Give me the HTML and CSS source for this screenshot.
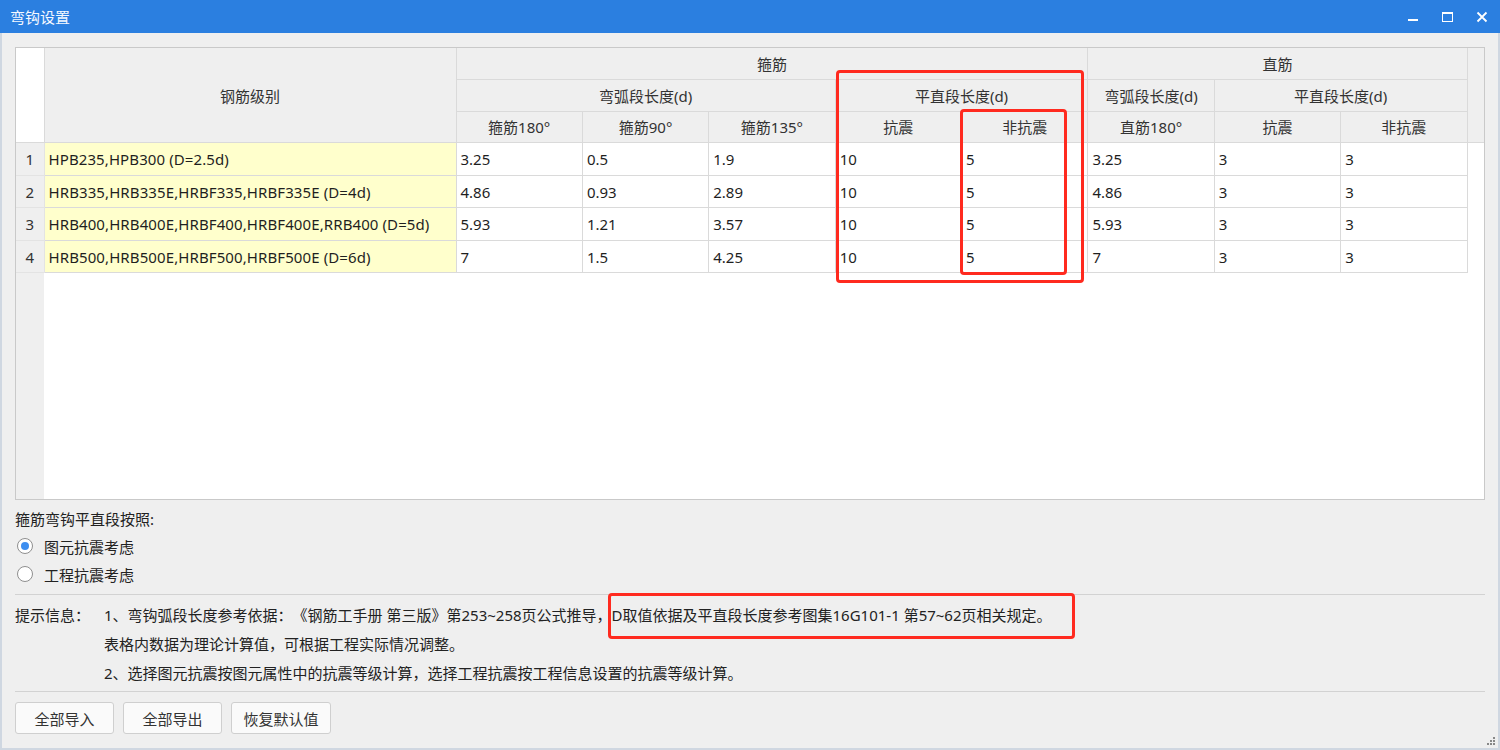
FILE: index.html
```html
<!DOCTYPE html>
<html lang="zh">
<head>
<meta charset="utf-8">
<title>弯钩设置</title>
<link rel="stylesheet" href="styles.css">
</head>
<body>
<div class="window">
  <div class="titlebar">
    <span class="title">弯钩设置</span>
    <div class="controls">
      <span class="ctl ctl-min"></span>
      <span class="ctl ctl-max"></span>
      <svg class="ctl-close" width="12" height="12" viewBox="0 0 12 12"><path d="M1.5 1.5 L10.5 10.5 M10.5 1.5 L1.5 10.5" stroke="#fff" stroke-width="1.8"/></svg>
    </div>
  </div>
  <div class="content">
    <div class="grid">
      <table class="tbl">
        <colgroup>
          <col class="c-num"><col class="c-grade">
          <col class="c-v"><col class="c-v"><col class="c-v"><col class="c-v"><col class="c-v"><col class="c-v"><col class="c-v"><col class="c-v">
          <col class="c-fill">
        </colgroup>
        <thead>
          <tr>
            <th class="corner" rowspan="3"></th>
            <th rowspan="3">钢筋级别</th>
            <th colspan="5">箍筋</th>
            <th colspan="3">直筋</th>
            <th class="fill" rowspan="3"></th>
          </tr>
          <tr>
            <th colspan="3">弯弧段长度(d)</th>
            <th colspan="2">平直段长度(d)</th>
            <th>弯弧段长度(d)</th>
            <th colspan="2">平直段长度(d)</th>
          </tr>
          <tr>
            <th>箍筋180°</th>
            <th>箍筋90°</th>
            <th>箍筋135°</th>
            <th>抗震</th>
            <th>非抗震</th>
            <th>直筋180°</th>
            <th>抗震</th>
            <th>非抗震</th>
          </tr>
        </thead>
        <tbody>
          <tr>
            <td class="num">1</td><td class="grade">HPB235,HPB300 (D=2.5d)</td>
            <td>3.25</td><td>0.5</td><td>1.9</td><td>10</td><td>5</td><td>3.25</td><td>3</td><td>3</td><td class="fill"></td>
          </tr>
          <tr>
            <td class="num">2</td><td class="grade">HRB335,HRB335E,HRBF335,HRBF335E (D=4d)</td>
            <td>4.86</td><td>0.93</td><td>2.89</td><td>10</td><td>5</td><td>4.86</td><td>3</td><td>3</td><td class="fill"></td>
          </tr>
          <tr>
            <td class="num">3</td><td class="grade">HRB400,HRB400E,HRBF400,HRBF400E,RRB400 (D=5d)</td>
            <td>5.93</td><td>1.21</td><td>3.57</td><td>10</td><td>5</td><td>5.93</td><td>3</td><td>3</td><td class="fill"></td>
          </tr>
          <tr>
            <td class="num">4</td><td class="grade">HRB500,HRB500E,HRBF500,HRBF500E (D=6d)</td>
            <td>7</td><td>1.5</td><td>4.25</td><td>10</td><td>5</td><td>7</td><td>3</td><td>3</td><td class="fill"></td>
          </tr>
        </tbody>
      </table>
      <div class="grid-empty"></div>
    </div>

    <div class="opt-title">箍筋弯钩平直段按照:</div>
    <div class="opt"><span class="radio checked"></span><span>图元抗震考虑</span></div>
    <div class="opt"><span class="radio"></span><span>工程抗震考虑</span></div>

    <div class="sep"></div>

    <div class="tips">
      <div class="tips-label">提示信息：</div>
      <div class="tips-body">
        <div class="tip">1、弯钩弧段长度参考依据：《钢筋工手册 第三版》第253~258页公式推导，D取值依据及平直段长度参考图集16G101-1 第57~62页相关规定。</div>
        <div class="tip">表格内数据为理论计算值，可根据工程实际情况调整。</div>
        <div class="tip">2、选择图元抗震按图元属性中的抗震等级计算，选择工程抗震按工程信息设置的抗震等级计算。</div>
      </div>
    </div>

    <div class="sep sep2"></div>

    <div class="buttons">
      <button class="btn">全部导入</button>
      <button class="btn">全部导出</button>
      <button class="btn">恢复默认值</button>
    </div>
  </div>

  <svg class="grip" width="8" height="8" viewBox="0 0 8 8">
    <rect x="6" y="0" width="2" height="2" fill="#888"/>
    <rect x="3" y="3" width="2" height="2" fill="#888"/>
    <rect x="6" y="3" width="2" height="2" fill="#888"/>
    <rect x="0" y="6" width="2" height="2" fill="#888"/>
    <rect x="3" y="6" width="2" height="2" fill="#888"/>
    <rect x="6" y="6" width="2" height="2" fill="#888"/>
  </svg>

  <div class="mark mark1"></div>
  <div class="mark mark2"></div>
  <div class="mark mark3"></div>
</div>
</body>
</html>
```

FILE: styles.css
```css
* { box-sizing: border-box; }
html, body { margin: 0; padding: 0; }
body {
  width: 1500px;
  height: 750px;
  background: #efefef;
  font-family: "Noto Sans", "Noto Sans CJK SC", sans-serif;
  font-size: 15px;
  color: #222;
  overflow: hidden;
  text-spacing-trim: space-all;
}
.window {
  position: relative;
  width: 1500px;
  height: 750px;
  display: flex;
  flex-direction: column;
  border-left: 2px solid #cfd7e1;
  border-right: 2px solid #cfd7e1;
  border-bottom: 2px solid #cfd7e1;
}
.titlebar {
  height: 33px;
  margin: 0 -2px;
  background: #2b7fe0;
  display: flex;
  align-items: center;
  justify-content: space-between;
  padding-left: 10px;
  color: #fff;
  flex: none;
}
.title { font-size: 15px; color: #f4f8ff; }
.controls {
  display: flex;
  align-items: center;
  height: 33px;
}
.ctl { display: block; }
.ctl-min {
  width: 10px;
  height: 2px;
  background: #fff;
  margin-top: 6px;
  margin-right: 24px;
}
.ctl-max {
  width: 11px;
  height: 10px;
  border: 1px solid #fff;
  border-top-width: 2px;
  margin-right: 23px;
}
.ctl-close { display: block; margin-right: 12px; }

.content {
  flex: 1;
  display: flex;
  flex-direction: column;
  padding: 14px 13px 0 13px;
}
.grid {
  height: 453px;
  border: 1px solid #c9c9c9;
  background: #fff;
  display: flex;
  flex-direction: column;
  flex: none;
}
.tbl {
  border-collapse: collapse;
  table-layout: fixed;
  width: 1468px;
}
.c-num { width: 28px; }
.c-grade { width: 412px; }
.c-v { width: 126.375px; }
.c-fill { width: 17px; }
.tbl th, .tbl td {
  border: 1px solid #dadada;
  padding: 0 4px;
  font-weight: normal;
  white-space: nowrap;
  overflow: hidden;
}
.tbl th { height: 31.6px; }
.tbl td { height: 32.5px; }
.tbl tr:first-child th { border-top: none; }
.tbl th {
  background: #efefef;
  color: #333;
  text-align: center;
}
.tbl th.corner {
  background: #fff;
  border-left: none;
}
.tbl th.fill {
  border-right: none;
  background: #efefef;
}
.tbl td { text-align: left; color: #1f1f1f; }
.tbl td.num {
  background: #efefef;
  color: #333;
  text-align: center;
  border-left: none;
  border-color: #e3e3e3;
}
.tbl td.grade { background: #ffffcc; letter-spacing: 0.1px; }
.tbl td.fill {
  border: none;
  border-left: 1px solid #dadada;
  background: #fff;
}
.grid-empty {
  flex: 1;
  border-left: 28px solid #efefef;
}

.opt-title {
  margin-top: 9px;
  height: 20px;
  line-height: 20px;
}
.opt {
  height: 28px;
  display: flex;
  align-items: center;
  gap: 11px;
  padding-left: 2px;
}
.opt-title + .opt { margin-top: 3px; }
.radio {
  width: 16px;
  height: 16px;
  border-radius: 50%;
  border: 1px solid #8f8f8f;
  background: #fff;
  position: relative;
  flex: none;
}
.radio.checked::after {
  content: "";
  position: absolute;
  left: 3px;
  top: 3px;
  width: 8px;
  height: 8px;
  border-radius: 50%;
  background: #3d8ef0;
}
.sep {
  height: 1px;
  background: #d2d2d2;
  margin-top: 6px;
  flex: none;
}
.tips {
  display: flex;
  padding-top: 6px;
}
.tips-label { width: 89px; flex: none; line-height: 29px; }
.tip { height: 29px; line-height: 29px; white-space: nowrap; }
.sep2 { margin-top: 3px; }
.buttons {
  display: flex;
  gap: 9px;
  margin-top: 10px;
}
.btn {
  width: 99px;
  height: 32px;
  border: 1px solid #cfcfcf;
  border-radius: 3px;
  background: #fafafa;
  font-family: inherit;
  font-size: 15px;
  color: #333;
  padding: 0;
}
.btn:last-child { width: 100px; }

.grip {
  position: absolute;
  right: 3px;
  bottom: 3px;
}

.mark {
  position: absolute;
  border: 3px solid #ff2a1f;
  border-radius: 4px;
  pointer-events: none;
}
.mark1 { left: 834px; top: 70px; width: 248px; height: 213px; }
.mark2 { left: 958px; top: 109px; width: 107px; height: 166px; }
.mark3 { left: 606px; top: 593px; width: 467px; height: 46px; }
```
